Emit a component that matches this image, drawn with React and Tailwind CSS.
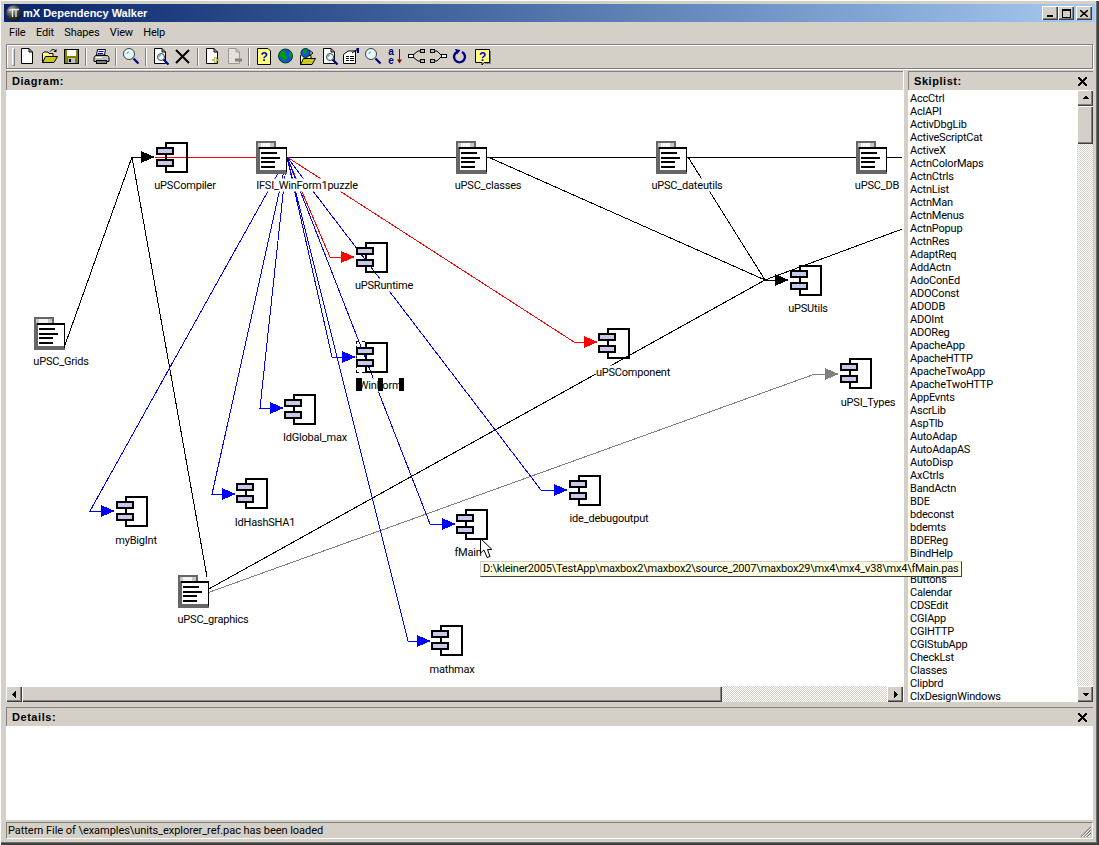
const uiFont = { fontFamily: "Roboto, 'Liberation Sans', Arial, sans-serif" };
const boldFont = { fontFamily: "'Liberation Sans', Arial, sans-serif" };

// the empty entry is the row hidden under the tooltip
const skiplist = ['AccCtrl','AclAPI','ActivDbgLib','ActiveScriptCat','ActiveX','ActnColorMaps','ActnCtrls','ActnList','ActnMan','ActnMenus','ActnPopup','ActnRes','AdaptReq','AddActn','AdoConEd','ADOConst','ADODB','ADOInt','ADOReg','ApacheApp','ApacheHTTP','ApacheTwoApp','ApacheTwoHTTP','AppEvnts','AscrLib','AspTlb','AutoAdap','AutoAdapAS','AutoDisp','AxCtrls','BandActn','BDE','bdeconst','bdemts','BDEReg','BindHelp','','Buttons','Calendar','CDSEdit','CGIApp','CGIHTTP','CGIStubApp','CheckLst','Classes','Clipbrd','ClxDesignWindows'];

// diagram data, in page coordinates
const edges = [
  ['#000', '65,345 132,157 142,157'],
  ['#000', '207,577 132,157'],
  ['#f00', '155,157 256,157'],
  ['#000', '287,157 905,157'],
  ['#000', '488,157 765,280 776,280'],
  ['#000', '688,157 765,280'],
  ['#000', '905,228 765,280'],
  ['#000', '207,590 765,280'],
  ['#808080', '207,593 815,374 826,374'],
  ['#f00', '287,157 330,257 342,257'],
  ['#f00', '287,157 574,342 585,342'],
  ['#00f', '287,157 90,511 102,511'],
  ['#00f', '287,157 212,494 223,494'],
  ['#00f', '287,157 260,408 271,408'],
  ['#00f', '287,157 332,357 342,357'],
  ['#00f', '287,157 408,641 418,641'],
  ['#00f', '287,157 430,524 443,524'],
  ['#00f', '287,157 541,490 555,490'],
];

const arrows = [
  ['#000', 155, 157], ['#000', 789, 280], ['#808080', 839, 374],
  ['#f00', 355, 257], ['#f00', 598, 342],
  ['#00f', 115, 511], ['#00f', 236, 494], ['#00f', 284, 408], ['#00f', 356, 357],
  ['#00f', 431, 641], ['#00f', 456, 524], ['#00f', 568, 490],
];

const nodes = [
  { type: 'comp', x: 155, y: 141, label: 'uPSCompiler', cx: 185, ly: 185 },
  { type: 'doc', x: 256, y: 141, label: 'IFSI_WinForm1puzzle', cx: 307, ly: 185 },
  { type: 'doc', x: 456, y: 141, label: 'uPSC_classes', cx: 488, ly: 185 },
  { type: 'doc', x: 656, y: 141, label: 'uPSC_dateutils', cx: 687, ly: 185 },
  { type: 'doc', x: 856, y: 141, label: 'uPSC_DB', cx: 877, ly: 185 },
  { type: 'comp', x: 355, y: 241, label: 'uPSRuntime', cx: 384, ly: 285 },
  { type: 'comp', x: 789, y: 264, label: 'uPSUtils', cx: 808, ly: 308 },
  { type: 'doc', x: 34, y: 317, label: 'uPSC_Grids', cx: 61, ly: 361 },
  { type: 'comp', x: 597, y: 327, label: 'uPSComponent', cx: 633, ly: 372 },
  { type: 'comp', x: 355, y: 341, label: 'WinForm', cx: 380, ly: 385 },
  { type: 'comp', x: 839, y: 357, label: 'uPSI_Types', cx: 868, ly: 402 },
  { type: 'comp', x: 283, y: 393, label: 'IdGlobal_max', cx: 315, ly: 437 },
  { type: 'comp', x: 568, y: 474, label: 'ide_debugoutput', cx: 609, ly: 518 },
  { type: 'comp', x: 235, y: 477, label: 'IdHashSHA1', cx: 265, ly: 522 },
  { type: 'comp', x: 115, y: 495, label: 'myBigInt', cx: 136, ly: 540 },
  { type: 'comp', x: 455, y: 508, label: 'fMain', cx: 468, ly: 552 },
  { type: 'doc', x: 178, y: 575, label: 'uPSC_graphics', cx: 213, ly: 619 },
  { type: 'comp', x: 430, y: 624, label: 'mathmax', cx: 452, ly: 669 },
];

function ComponentIcon() {
  return (
    <svg width="34" height="33" viewBox="0 0 34 33" shapeRendering="crispEdges" className="block">
      <path d="M11 6V2H32V31H11V26M11 18V14" fill="none" stroke="#000" strokeWidth="2" />
      <rect x="2" y="7" width="16" height="6" fill="#c8c8e8" stroke="#000" strokeWidth="2" />
      <rect x="2" y="19" width="16" height="6" fill="#c8c8e8" stroke="#000" strokeWidth="2" />
    </svg>
  );
}

function DocIcon() {
  return (
    <svg width="32" height="33" viewBox="0 0 32 33" shapeRendering="crispEdges" className="block">
      <rect x="0" y="0" width="20" height="8" fill="#666" />
      <rect x="2" y="2" width="16" height="5" fill="#c8c8c8" />
      <rect x="5" y="2" width="9" height="4" fill="#f4f4f4" />
      <rect x="0" y="6" width="4" height="27" fill="#666" />
      <rect x="0" y="29" width="31" height="4" fill="#666" />
      <rect x="4" y="8" width="26" height="21" fill="#fff" />
      <rect x="3" y="6" width="28" height="2" fill="#000" />
      <rect x="30" y="6" width="1" height="25" fill="#000" />
      <rect x="5" y="11" width="16" height="2" fill="#000" />
      <rect x="5" y="16" width="19" height="2" fill="#000" />
      <rect x="5" y="20" width="14" height="2" fill="#000" />
      <rect x="5" y="25" width="14" height="2" fill="#000" />
    </svg>
  );
}

function Page({ fill = '#fff', stroke = '#000' }) {
  return <path d="M2.5 .5H10L13.5 4V15.5H2.5Z M10 .5V4H13.5" fill={fill} stroke={stroke} />;
}

function Lens({ x = 5, y = 6, r = 4.5 }) {
  return (
    <g>
      <line x1={x + r - 1} y1={y + r - 1} x2={x + r + 4} y2={y + r + 4} stroke="#000080" strokeWidth="2.2" />
      <circle cx={x} cy={y} r={r} fill="#e4f8f8" stroke="#404040" />
      <path d={`M${x - 2} ${y}A2 2 0 0 1 ${x} ${y - 2}`} fill="none" stroke="#20b0b0" />
    </g>
  );
}

function FolderShape() {
  return (
    <g>
      <path d="M1.5 14.5V5.5L3 4H7L8 5.5H12V8" fill="#ffff99" stroke="#000" />
      <path d="M1.5 14.5L4.5 8.5H16.5L13 14.5Z" fill="#c8c820" stroke="#000" />
    </g>
  );
}

const toolIcons = {
  new: <Page />,
  open: (
    <g>
      <FolderShape />
      <path d="M9 3.5C11 1 13 1 15 3" fill="none" stroke="#000" />
      <path d="M15.5 1V4H12.5Z" fill="#000" />
    </g>
  ),
  save: (
    <g shapeRendering="crispEdges">
      <rect x="1.5" y="1.5" width="14" height="14" fill="#808000" stroke="#000" />
      <rect x="4" y="2" width="9" height="6" fill="#fff" />
      <rect x="5" y="10" width="7" height="5" fill="#c0c0c0" />
      <rect x="6" y="11" width="2" height="3" fill="#000" />
    </g>
  ),
  print: (
    <g>
      <path d="M4.5 1.5H12.5L11.5 7H3.5Z" fill="#fff" stroke="#000" />
      <path d="M5.5 3.5H10.5M5 5.5H10" stroke="#0000c0" />
      <path d="M2.5 7.5H14.5L16 9.5V13.5H1V9.5Z" fill="#c0c0c0" stroke="#000" />
      <rect x="3.5" y="12.5" width="10" height="3" fill="#808080" stroke="#000" />
      <path d="M3 9.5H9" stroke="#fff" />
    </g>
  ),
  search: <Lens x={6} y={6} r={5.5} />,
  preview: (
    <g>
      <Page />
      <Lens x={9} y={9} r={3.5} />
    </g>
  ),
  remove: <path d="M2 2L15 15M15 2L2 15" stroke="#000" strokeWidth="2" />,
  addPage: (
    <g>
      <Page />
      <path d="M11.5 9V15M8.5 12H14.5" stroke="#808000" strokeWidth="2" />
      <path d="M11.5 9.5V14.5M9 12H14" stroke="#ffff40" />
    </g>
  ),
  removePage: (
    <g>
      <Page fill="#e4e2dc" stroke="#9c9a94" />
      <path d="M9 12H16" stroke="#808080" strokeWidth="3" />
    </g>
  ),
  help: (
    <g>
      <path d="M1.5 .5H12L14.5 3V16.5H1.5Z" fill="#ffff80" stroke="#000" />
      <text x="8" y="13" textAnchor="middle" fontSize="12" fontWeight="700" fill="#0000c0" style={boldFont}>?</text>
    </g>
  ),
  globe: (
    <g>
      <circle cx="8.5" cy="8" r="7" fill="#1050e0" stroke="#004000" />
      <path d="M4 3L9 3L8 7L11 9L8 13L5 10L2.5 8Z" fill="#00a000" />
      <path d="M12 3L15 6L14 10L12 8Z" fill="#00a000" />
    </g>
  ),
  globeOpen: (
    <g>
      <g transform="translate(0 2)"><FolderShape /></g>
      <circle cx="6.5" cy="5" r="4.5" fill="#1050e0" stroke="#004000" />
      <path d="M4 2L8 2L7 5L4.5 7Z" fill="#00a000" />
      <path d="M10 2L14 5L10 8" fill="none" stroke="#000" />
    </g>
  ),
  props: (
    <g>
      <path d="M.5 6.5L5 3H12.5V15.5H.5Z" fill="#fff" stroke="#000" />
      <path d="M3 8.5H6M7 8.5H11M3 10.5H6M7 10.5H11M3 12.5H6M7 12.5H11" stroke="#000" />
      <path d="M9 5L14 1.5" stroke="#000" />
      <path d="M13.5 0H16V5H14Z" fill="#000080" />
    </g>
  ),
  find: <Lens x={6} y={6} r={5.5} />,
  sort: (
    <g>
      <text x="5" y="7" textAnchor="middle" fontSize="10" fontWeight="700" fill="#000080" style={boldFont}>a</text>
      <text x="5" y="16" textAnchor="middle" fontSize="10" fontWeight="700" fill="#000080" style={boldFont}>e</text>
      <path d="M13.5 1V14" stroke="#900000" />
      <path d="M11 11.5H16L13.5 15.5Z" fill="#900000" />
    </g>
  ),
  fork: (
    <g shapeRendering="crispEdges">
      <rect x=".5" y="6.5" width="5" height="3" fill="#fff" stroke="#000" />
      <rect x="12.5" y="1.5" width="4" height="3" fill="#c0c0c0" stroke="#000" />
      <rect x="12.5" y="11.5" width="4" height="3" fill="#c0c0c0" stroke="#000" />
      <path d="M5 7L10 3H12M5 9L10 13H12" fill="none" stroke="#000" shapeRendering="auto" />
    </g>
  ),
  join: (
    <g shapeRendering="crispEdges">
      <rect x=".5" y="1.5" width="4" height="3" fill="#c0c0c0" stroke="#000" />
      <rect x=".5" y="11.5" width="4" height="3" fill="#c0c0c0" stroke="#000" />
      <rect x="11.5" y="6.5" width="5" height="3" fill="#fff" stroke="#000" />
      <path d="M5 3H7L11 7M5 13H7L11 9" fill="none" stroke="#000" shapeRendering="auto" />
    </g>
  ),
  refresh: (
    <g>
      <path d="M10 4A5.5 5.5 0 1 1 5 4" fill="none" stroke="#000080" strokeWidth="2.4" />
      <path d="M3 1L8.5 2L5 6.5Z" fill="#000080" />
    </g>
  ),
  helpBubble: (
    <g>
      <path d="M1.5 1.5H15.5V14.5H10L8 17V14.5H1.5Z" fill="#ffff80" stroke="#000" />
      <path d="M16.5 3V15.5H11" fill="none" stroke="#808080" />
      <text x="8.5" y="12.5" textAnchor="middle" fontSize="12" fontWeight="700" fill="#0000c0" style={boldFont}>?</text>
    </g>
  ),
};

const toolbar = [
  ['new', 'open', 'save'], ['print'], ['search'], ['preview', 'remove'], ['addPage', 'removePage'],
  ['help', 'globe', 'globeOpen', 'preview', 'props', 'find', 'sort', 'fork', 'join', 'refresh', 'helpBubble'],
];

function ToolButton({ name }) {
  return (
    <div className="w-[21.8px] flex items-center justify-center shrink-0">
      <svg width="17" height="17" viewBox="0 0 17 17" className="overflow-visible">{toolIcons[name]}</svg>
    </div>
  );
}

function Sep() {
  return <div className="w-[2px] h-[18px] mx-[3px] border-l border-r border-l-[#808080] border-r-white shrink-0" />;
}

const raised = 'bg-[#d4d0c8] shadow-[inset_1px_1px_#fff,inset_-1px_-1px_#404040,inset_-2px_-2px_#808080]';
const dither = 'bg-[repeating-conic-gradient(#d4d0c8_0_25%,#ffffff_0_50%)] bg-[length:2px_2px]';

function ScrollButton({ dir }) {
  const tri = {
    up: 'M4 8H11L7.5 4.5Z',
    down: 'M4 6H11L7.5 9.5Z',
    left: 'M9 3.5V11.5L5 7.5Z',
    right: 'M6 3.5V11.5L10 7.5Z',
  }[dir];
  return (
    <div className={`w-[16px] h-[16px] shrink-0 ${raised} flex items-center justify-center`}>
      <svg width="15" height="15" viewBox="0 0 15 15" shapeRendering="crispEdges"><path d={tri} fill="#000" /></svg>
    </div>
  );
}

function CloseGlyph() {
  return (
    <svg width="9" height="9" viewBox="0 0 9 9" shapeRendering="crispEdges">
      <path d="M0 0H2L4.5 3L7 0H9V1L6 4.5L9 8V9H7L4.5 6L2 9H0V8L3 4.5L0 1Z" fill="#000" />
    </svg>
  );
}

function PaneHeader({ title, closable }) {
  return (
    <div className="h-[19px] shrink-0 flex items-center justify-between pl-[5px] pr-[6px] bg-[#d4d0c8] border-t border-l border-t-[#808080] border-l-[#808080] text-[11px] font-bold tracking-[0.55px] text-black" style={boldFont}>
      <span>{title}</span>
      {closable && <CloseGlyph />}
    </div>
  );
}

function Diagram() {
  return (
    <div className="relative flex-1 bg-white overflow-hidden">
      <svg width="896" height="596" viewBox="6 90 896 596" shapeRendering="crispEdges" className="absolute left-0 top-0">
        {edges.map(([color, pts], i) => (
          <polyline key={i} points={pts} fill="none" stroke={color} strokeWidth="1" />
        ))}
        {arrows.map(([color, x, y], i) => (
          <polygon key={i} points={`${x - 14},${y - 6} ${x},${y} ${x - 14},${y + 6}`} fill={color} />
        ))}
      </svg>
      {nodes.map((n) => (
        <div key={n.label} className="absolute" style={{ left: n.x - 6, top: n.y - 90 }}>
          {n.type === 'comp' ? <ComponentIcon /> : <DocIcon />}
        </div>
      ))}
      {nodes.map((n) => (
        <div
          key={n.label}
          className="absolute -translate-x-1/2 -translate-y-1/2 bg-white text-[11px] leading-[13px] text-black whitespace-nowrap"
          style={{ left: n.cx - 6, top: n.ly - 90 }}
        >
          {n.label}
        </div>
      ))}
      {/* selection handles on WinForm */}
      <div className="absolute left-[350px] top-[288px] w-[6px] h-[13px] bg-black" />
      <div className="absolute left-[372px] top-[288px] w-[5px] h-[13px] bg-black" />
      <div className="absolute left-[393px] top-[288px] w-[5px] h-[13px] bg-black" />
      <div className="absolute left-[350px] top-[251px] w-[9px] h-[32px] border-l border-t border-b border-dashed border-black" />
    </div>
  );
}

export default function App() {
  return (
    <div
      className="relative w-[1099px] h-[845px] overflow-hidden p-[4px] flex flex-col text-black tracking-[-0.2px] bg-[#d4d0c8] shadow-[inset_1px_1px_#fff,inset_-1px_-1px_#404040,inset_-2px_-2px_#404040,inset_-3px_-3px_#707070]"
      style={uiFont}
    >
      {/* title bar */}
      <div className="h-[18px] shrink-0 flex items-center bg-gradient-to-r from-[#0a246a] to-[#a6caf0] pl-[2px] pr-[3px]">
        <svg width="16" height="16" viewBox="0 0 16 16" className="shrink-0">
          <defs>
            <radialGradient id="logoBall" cx="35%" cy="30%" r="75%">
              <stop offset="0%" stopColor="#b0b0b0" />
              <stop offset="60%" stopColor="#3c3c3c" />
              <stop offset="100%" stopColor="#101010" />
            </radialGradient>
          </defs>
          <circle cx="8" cy="8" r="7.8" fill="url(#logoBall)" />
          <path d="M3 6C4 4 6 4.5 8 4.5H13M6.5 4.5V12M10 4.5V12" stroke="#e8e8e8" strokeWidth="1.3" fill="none" />
        </svg>
        <span className="ml-[1px] text-[11px] font-bold text-white flex-1 tracking-normal" style={boldFont}>mX Dependency Walker</span>
        <div className="flex items-center">
          <div className={`w-[16px] h-[14px] ${raised} flex items-end justify-center pb-[3px]`}>
            <div className="w-[6px] h-[2px] bg-black" />
          </div>
          <div className={`w-[16px] h-[14px] ${raised} flex items-center justify-center`}>
            <div className="w-[9px] h-[9px] border border-t-2 border-black" />
          </div>
          <div className={`w-[16px] h-[14px] ml-[2px] ${raised} flex items-center justify-center`}>
            <svg width="8" height="7" viewBox="0 0 8 7"><path d="M0 0L8 7M8 0L0 7" stroke="#000" strokeWidth="1.5" /></svg>
          </div>
        </div>
      </div>

      {/* menu */}
      <div className="h-[20px] shrink-0 flex items-center gap-[10.5px] pl-[5px] pt-[2px] text-[11px]">
        <span>File</span>
        <span>Edit</span>
        <span>Shapes</span>
        <span>View</span>
        <span>Help</span>
      </div>

      {/* toolbar */}
      <div className="h-[25px] mt-[2px] mx-[2px] shrink-0 flex items-center pl-[5px] border border-[#808080] shadow-[inset_1px_1px_#fff,1px_1px_#fff]">
        <div className="w-[3px] h-[18px] mr-[2px] border-l border-r border-l-white border-r-[#808080] border-t border-b border-t-white border-b-[#808080] shrink-0" />
        {toolbar.map((group, g) => (
          <div key={g} className="flex items-center">
            {g > 0 && <Sep />}
            {group.map((name, i) => <ToolButton key={i} name={name} />)}
          </div>
        ))}
      </div>

      {/* diagram + skiplist */}
      <div className="h-[631px] mt-[2px] mx-[2px] shrink-0 flex">
        <div className="w-[897px] flex flex-col">
          <PaneHeader title="Diagram:" />
          <Diagram />
          <div className="h-[16px] shrink-0 flex">
            <ScrollButton dir="left" />
            <div className={`w-[700px] ${raised}`} />
            <div className={`flex-1 ${dither}`} />
            <ScrollButton dir="right" />
          </div>
        </div>
        <div className="w-[5px] shrink-0 border-l border-white" />
        <div className="flex-1 flex flex-col min-w-0">
          <PaneHeader title="Skiplist:" closable />
          <div className="flex-1 flex min-h-0">
            <div className="flex-1 bg-white overflow-hidden pl-[2px] pt-[2px] text-[11px] leading-[13px]">
              {skiplist.map((s, i) => <div key={i} className="h-[13px] whitespace-nowrap">{s}</div>)}
            </div>
            <div className="w-[16px] shrink-0 flex flex-col">
              <ScrollButton dir="up" />
              <div className={`h-[38px] shrink-0 ${raised}`} />
              <div className={`flex-1 ${dither}`} />
              <ScrollButton dir="down" />
            </div>
          </div>
        </div>
      </div>

      {/* details */}
      <div className="mt-[5px] mx-[2px] shrink-0 flex flex-col">
        <PaneHeader title="Details:" closable />
        <div className="h-[94px] bg-white" />
      </div>

      {/* status bar */}
      <div className="relative h-[17px] mt-[2px] mx-[2px] shrink-0 flex items-center pl-[1px] pt-[2px] text-[11px] tracking-[-0.05px] border-t border-t-[#808080] border-l border-l-[#808080] border-b border-b-white border-r border-r-white">
        Pattern File of \examples\units_explorer_ref.pac has been loaded
        <svg width="13" height="13" viewBox="0 0 13 13" className="absolute right-0 bottom-0">
          <path d="M12 2L2 12M12 5L5 12M12 8L8 12" stroke="#808080" strokeWidth="1.2" />
          <path d="M12 3L3 12M12 6L6 12M12 9L9 12" stroke="#fff" />
        </svg>
      </div>

      {/* tooltip + mouse cursor, both float over the panes */}
      <div className="absolute left-[480px] top-[561px] h-[16px] px-[2px] flex items-center bg-[#ffffe1] border-r border-b border-r-[#404040] border-b-[#404040] border-l border-t border-l-[#d4d0c8] border-t-[#d4d0c8] text-[11px] whitespace-nowrap">
        {'D:\\kleiner2005\\TestApp\\maxbox2\\maxbox2\\source_2007\\maxbox29\\mx4\\mx4_v38\\mx4\\fMain.pas'}
      </div>
      <svg width="14" height="22" viewBox="0 0 14 22" className="absolute left-[480px] top-[538px]">
        <path d="M.5 .5V15L4 12L7 19.5L10 18.5L7.5 11.5H12Z" fill="#fff" stroke="#000" />
      </svg>
    </div>
  );
}
